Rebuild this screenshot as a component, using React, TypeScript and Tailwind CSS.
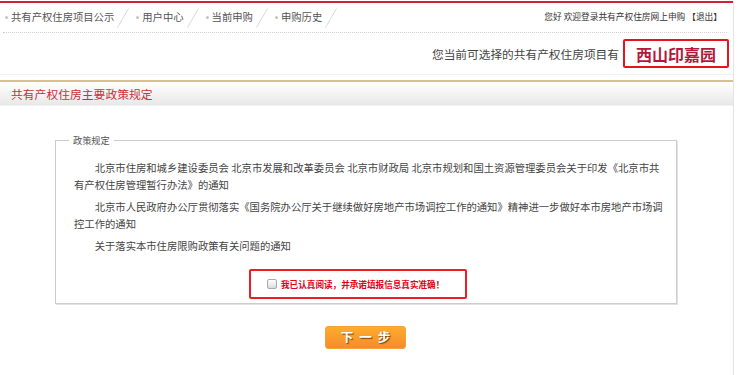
import React from 'react'

const navItems = ['共有产权住房项目公示', '用户中心', '当前申购', '申购历史']

const policies = [
  '北京市住房和城乡建设委员会 北京市发展和改革委员会 北京市财政局 北京市规划和国土资源管理委员会关于印发《北京市共有产权住房管理暂行办法》的通知',
  '北京市人民政府办公厅贯彻落实《国务院办公厅关于继续做好房地产市场调控工作的通知》精神进一步做好本市房地产市场调控工作的通知',
  '关于落实本市住房限购政策有关问题的通知',
]

function Slash() {
  return (
    <svg width="12" height="20" viewBox="0 0 12 20" className="shrink-0">
      <line x1="0.5" y1="19.5" x2="11.5" y2="0.5" stroke="#d8d8d8" strokeWidth="1" />
    </svg>
  )
}

export default function App() {
  return (
    <div className="w-[740px] h-[375px] overflow-hidden bg-white font-['Noto_Sans_CJK_SC','Microsoft_YaHei',sans-serif]">
      <div className="w-[734px] h-full border-r border-[#e4e4e4]">
        {/* 顶部导航 */}
        <div className="mt-[1px] border-t-2 border-[#d0213a]">
          <div className="h-[29px] flex items-center justify-between pl-[5px] pr-[11px]">
            <div className="flex items-center text-[10.33px] text-[#555]">
              {navItems.map((item, i) => (
                <div key={item} className={`flex items-center ${i > 0 ? 'ml-[7px]' : ''}`}>
                  <span className="w-[3px] h-[3px] rounded-full bg-[#c4c4c4] mr-[3px]" />
                  <span className="leading-none">{item}</span>
                  <span className="ml-[3px]">
                    <Slash />
                  </span>
                </div>
              ))}
            </div>
            <div className="text-[8.7px] text-[#333] leading-none">
              您好 欢迎登录共有产权住房网上申购 【退出】
            </div>
          </div>
          <div className="ml-[3px] mr-[6px] border-b border-dotted border-[#d0d0d0]" />
        </div>

        {/* 当前项目 */}
        <div className="h-[42px] flex items-center justify-end pr-[4px] border-b border-[#f0f0f0]">
          <span className="text-[11.7px] text-[#444] leading-none mr-[4px]">您当前可选择的共有产权住房项目有</span>
          <div className="w-[106px] h-[29px] border-2 border-[#e8141c] rounded-[2px] flex items-center justify-center">
            <span className="text-[16px] font-bold text-[#b3183a] leading-none">西山印嘉园</span>
          </div>
        </div>
        <div className="mt-[5px] h-[2px] bg-[#d6c38b]" />

        {/* 栏目标题 */}
        <div className="h-[24px] flex items-center pl-[11px] bg-gradient-to-b from-white to-[#e8e8e8] border-b border-[#f2f2f2]">
          <span className="text-[11.8px] text-[#c9303a] leading-none">共有产权住房主要政策规定</span>
        </div>

        {/* 政策规定 */}
        <div className="pt-[28px] pl-[55px]">
          <fieldset className="w-[622px] border border-[#cdcdcd] shadow-[1px_1px_0_#e2e2e2] pl-[18px] pr-[9px] pb-[4px]">
            <legend className="-ml-[5px] px-[4px] text-[9.2px] leading-[12px] text-[#555]">政策规定</legend>
            <div className="pt-[13px] text-[10.33px] leading-[17px] text-[#444]">
              {policies.map((p, i) => (
                <p key={i} className={`indent-[2em] ${i > 0 ? 'mt-[5px]' : ''}`}>
                  {p}
                </p>
              ))}
            </div>
            <div className="mt-[15px] ml-[175px] w-[218px] h-[30px] border-2 border-[#ee1c25] rounded-[2px] flex items-center pl-[16px]">
              <span className="w-[10px] h-[10px] rounded-[2px] border border-[#a9a9a9] bg-gradient-to-b from-white to-[#dcdcdc] mr-[4px]" />
              <span className="text-[8.6px] font-bold text-[#e50012] leading-none">我已认真阅读，并承诺填报信息真实准确！</span>
            </div>
          </fieldset>
        </div>

        {/* 下一步 */}
        <div className="mt-[19px] pl-[325px]">
          <button className="w-[81px] h-[23px] pl-[6px] rounded-[3px] border border-[#f6a23a] bg-gradient-to-b from-[#fdac2c] to-[#f68b2c] text-white text-[12.5px] font-bold leading-none tracking-[6px] [text-shadow:1px_1px_1px_#7a3d00]">
            下一步
          </button>
        </div>
      </div>
    </div>
  )
}
